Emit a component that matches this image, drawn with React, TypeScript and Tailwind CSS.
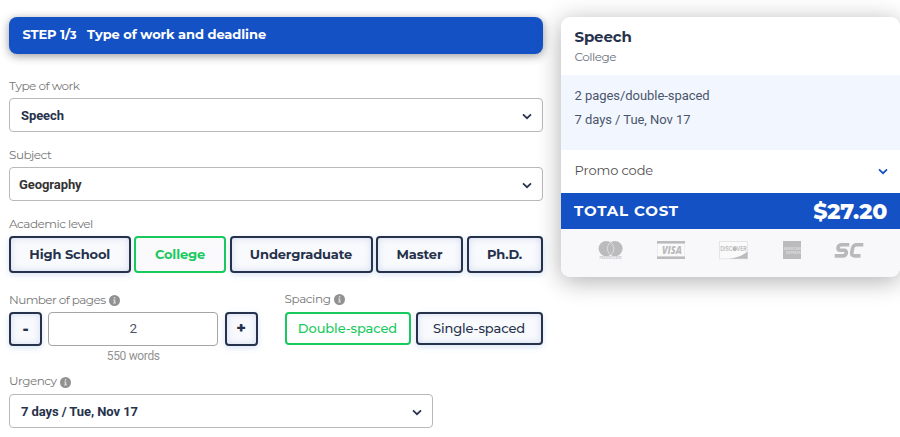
import React from "react";

const GEO = "font-['Montserrat','Inter',sans-serif]";

function Chevron({ className }: { className: string }) {
  return (
    <svg width="10" height="7" viewBox="0 0 10 7" fill="none" className={className}>
      <path d="M1 1.300 L5 5.200 L9 1.300" stroke="currentColor" strokeWidth="1.700" />
    </svg>
  );
}

function Info() {
  return (
    <svg width="11" height="11" viewBox="0 0 11 11" className="shrink-0">
      <circle cx="5.5" cy="5.5" r="5.5" fill="#919191" />
      <rect x="4.8" y="2.2" width="1.5" height="1.5" fill="#dcdcdc" />
      <path d="M4.3 4.6h2v3h.6v.9H4.2v-.9h.6V5.500h-.5z" fill="#dcdcdc" />
    </svg>
  );
}

function Label({ text, className, info }: { text: string; className: string; info?: boolean }) {
  return (
    <div className={`${GEO} flex items-center whitespace-nowrap text-[12px] font-normal text-[#777777] ${className}`}>
      <span>{text}</span>
      {info && <span className="ml-[3.5px] mt-[2px]"><Info /></span>}
    </div>
  );
}

function Select({ value, className }: { value: string; className: string }) {
  return (
    <div className={`flex h-[34px] items-center justify-between rounded-[4px] border border-[#b9b9b9] bg-white pr-[10px] font-[Roboto,sans-serif] text-[13px] font-bold tracking-[-0.08px] ${className}`}>
      <span className="pt-px">{value}</span>
      <Chevron className="mt-[2px] text-[#27334b]" />
    </div>
  );
}

const DARK =
  "border-[#26324b] text-[#26324b] bg-[#f9fafd] shadow-[0_2px_6px_rgba(120,160,220,0.28),inset_0_0_7px_rgba(120,150,210,0.3)]";
const GREEN = "border-[#18c95e] text-[#18c95e]";

function Option({ text, active, className }: { text: string; active?: boolean; className: string }) {
  return (
    <button className={`${GEO} flex shrink-0 items-center justify-center whitespace-nowrap rounded-[4px] border-2 ${active ? GREEN : DARK} ${className}`}>
      {text}
    </button>
  );
}

function Payments() {
  return (
    <svg width="339" height="48" viewBox="0 0 339 48" fill="#bbbbbd" className="block">
      <circle cx="45.2" cy="19.6" r="7.6" />
      <circle cx="54" cy="19.6" r="7.6" />
      <path d="M49.6 13.4a7.600 7.600 0 0 1 0 12.400a7.600 7.600 0 0 1 0-12.400z" stroke="#e6e6e8" strokeWidth="0.8" />
      <text x="38.500" y="30.200" fontSize="4" fontFamily="Inter" fontWeight="600" textLength="22" lengthAdjust="spacingAndGlyphs" fill="#c6c6c8">mastercard</text>
      <rect x="96.400" y="12.600" width="27" height="17" fill="#fafafb" stroke="#e7e7e9" strokeWidth="0.7" />
      <rect x="96" y="12" width="28" height="2.600" />
      <rect x="96" y="27.400" width="28" height="2.600" />
      <text x="101" y="24.700" fontSize="10" fontFamily="Open Sans" fontWeight="800" fontStyle="italic" textLength="20" lengthAdjust="spacingAndGlyphs">VISA</text>
      <rect x="158.400" y="12.400" width="28.200" height="17.400" fill="#fafafb" stroke="#dededf" strokeWidth="0.7" />
      <path d="M186.600 22.500v7.300H168c8-1 14-3.500 18.600-7.300z" />
      <text x="159.300" y="22.200" fontSize="6" fontFamily="Inter" fontWeight="600" textLength="26.400" lengthAdjust="spacingAndGlyphs">DISCOVER</text>
      <circle cx="173.700" cy="20" r="2.100" />
      <rect x="222" y="12" width="18" height="18" />
      <text x="222.400" y="21.300" fontSize="3.800" fontFamily="Inter" fontWeight="700" textLength="17.200" lengthAdjust="spacingAndGlyphs" fill="#dcdcde">AMERICAN</text>
      <text x="225" y="25" fontSize="3.800" fontFamily="Inter" fontWeight="700" textLength="15" lengthAdjust="spacingAndGlyphs" fill="#dcdcde">EXPRESS</text>
      <g fill="none" stroke="#b9b9bb" strokeWidth="3.600">
        <path d="M288.300 15.800H280.700q-3 0-3.600 2.600q-.6 2.900 2.200 2.900h3.800q2.600 0 2.100 2.800q-.5 2.800-3.300 2.800h-8.200" />
        <path d="M302.300 15.800h-6.400q-3.600 0-4.300 3.300l-.8 4.400q-.6 3.400 3 3.400h5.700" />
      </g>
    </svg>
  );
}

export default function App() {
  return (
    <div className="flex h-[437px] w-[900px] overflow-hidden bg-white">
      <div className="ml-[9px] mt-[17px] w-[533.5px] shrink-0">
        <div className={`${GEO} flex h-[37px] items-center whitespace-nowrap rounded-[8px] bg-[#1451c4] pb-px pl-[13.5px] font-bold text-white shadow-[0_2px_10px_rgba(0,0,0,0.4)]`}>
          <span className="w-[64.5px] text-[13px] tracking-[-0.1px]">STEP 1/<span className="text-[11px]">3</span></span>
          <span className="text-[13px] tracking-[-0.08px]">Type of work and deadline</span>
        </div>
        <Label text="Type of work" className="mt-[22px] h-[22px] pb-[2px] tracking-[-0.5px]" />
        <Select value="Speech" className="pl-[11px] text-[#26324b]" />
        <Label text="Subject" className="mt-[12px] h-[23px] pb-[2px] tracking-[-0.5px]" />
        <Select value="Geography" className="pl-[9px] text-[#333333]" />
        <Label text="Academic level" className="mt-[12px] h-[23px] pb-px tracking-[-0.5px]" />
        <div className="flex h-[37px] justify-between text-[13px] font-bold tracking-[-0.12px]">
          <Option text="High School" className="w-[121.5px]" />
          <Option text="College" active className="w-[92px] bg-[#fafafd]" />
          <Option text="Undergraduate" className="w-[143px]" />
          <Option text="Master" className="w-[87px]" />
          <Option text="Ph.D." className="w-[76px]" />
        </div>
        <div className="flex justify-between">
          <div className="w-[248.5px]">
            <Label text="Number of pages" info className="mt-[15px] h-[24px] pb-px tracking-[-0.58px]" />
            <div className="flex h-[34px] justify-between">
              <Option text="-" className="w-[33px] pb-px text-[16px] font-extrabold" />
              <div className="flex w-[170px] items-center justify-center rounded-[4px] border border-[#a5a5a5] pb-px font-[Roboto,sans-serif] text-[13.5px] text-[#4d5566]">2</div>
              <Option text="+" className="w-[33px] pb-px text-[16px] font-extrabold" />
            </div>
            <div className="h-[20px] text-center font-[Roboto,sans-serif] text-[12px] leading-[20px] tracking-[-0.35px] text-[#929292]">550 words</div>
          </div>
          <div className="w-[258px]">
            <Label text="Spacing" info className="mt-[14px] h-[25px] pb-[2px] tracking-[-0.4px]" />
            <div className="flex h-[33px] justify-between text-[13px] font-medium tracking-[-0.1px]">
              <Option text="Double-spaced" active className="w-[126px] bg-white pt-px" />
              <Option text="Single-spaced" className="w-[127px] pt-px" />
            </div>
          </div>
        </div>
        <Label text="Urgency" info className="mt-[3px] h-[25px] pb-px tracking-[-0.5px]" />
        <Select value="7 days / Tue, Nov 17" className="w-[423.5px] pl-[11px] text-[#26324b]" />
      </div>
      <div className="ml-[18.5px] mt-[17px] h-[260px] w-[339px] shrink-0 overflow-hidden rounded-[9px] bg-white shadow-[0_4px_24px_rgba(0,0,0,0.32)]">
        <div className={`${GEO} h-[58px] pl-[13.5px] pt-[10px]`}>
          <div className="text-[15px] font-bold leading-[20px] tracking-[-0.15px] text-[#26324b]">Speech</div>
          <div className="text-[12px] font-normal leading-[20px] tracking-[-0.5px] text-[#6b7280]">College</div>
        </div>
        <div className="h-[75px] bg-[#f2f7ff] pl-[13.5px] pt-[9px] font-[Roboto,sans-serif] text-[13px] leading-[24px] tracking-[-0.05px] text-[#4b556b]">
          <div>2 pages/double-spaced</div>
          <div>7 days / Tue, Nov 17</div>
        </div>
        <div className={`${GEO} flex h-[43px] items-center justify-between pb-[2px] pl-[13.5px] pr-[12px] text-[13px] font-normal tracking-[-0.1px] text-[#505050]`}>
          <span>Promo code</span>
          <Chevron className="mt-[2px] text-[#1451c4]" />
        </div>
        <div className={`${GEO} flex h-[36px] items-center justify-between bg-[#1451c4] pl-[13px] pr-[13px] font-bold text-white`}>
          <span className="text-[15px] tracking-[0.8px]">TOTAL COST</span>
          <span className="text-[22px] font-extrabold tracking-[-0.2px]">$27.20</span>
        </div>
        <div className="h-[48px] bg-[#f8f8fb]">
          <Payments />
        </div>
      </div>
    </div>
  );
}
